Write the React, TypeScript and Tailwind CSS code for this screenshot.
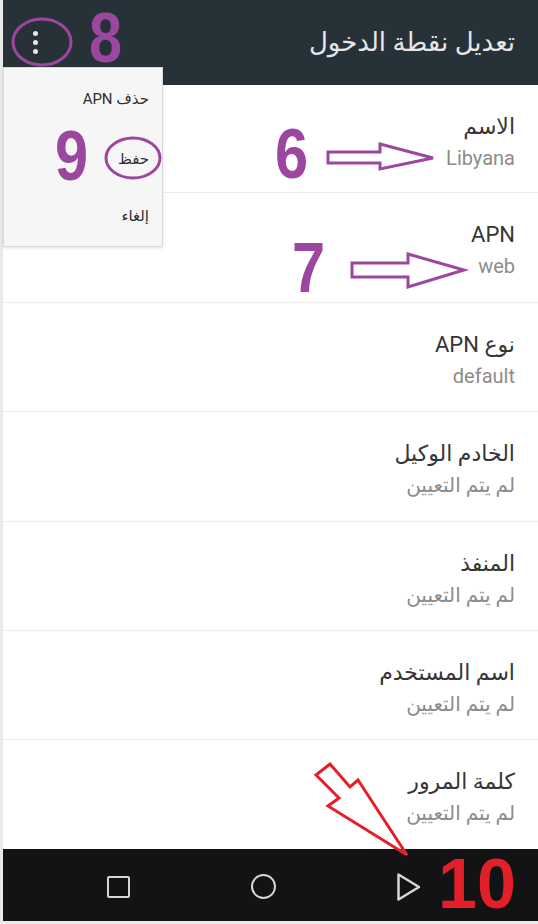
import React from "react";

type Row = { title: string; value: string; h: string };

const rows: Row[] = [
  { title: "الاسم", value: "Libyana", h: "h-[108px]" },
  { title: "APN", value: "web", h: "h-[110px]" },
  { title: "نوع APN", value: "default", h: "h-[109px]" },
  { title: "الخادم الوكيل", value: "لم يتم التعيين", h: "h-[110px]" },
  { title: "المنفذ", value: "لم يتم التعيين", h: "h-[109px]" },
  { title: "اسم المستخدم", value: "لم يتم التعيين", h: "h-[109px]" },
  { title: "كلمة المرور", value: "لم يتم التعيين", h: "h-[109px]" },
];

const PURPLE = "#9b479f";
const RED = "#e3202a";

function Num({ n, className, red }: { n: string; className: string; red?: boolean }) {
  return (
    <span
      className={`absolute origin-left text-[70px] leading-none font-bold ${red ? "scale-x-100" : "scale-x-[0.85]"} ${className}`}
      style={{ fontFamily: '"Liberation Sans", Arial, sans-serif', color: red ? RED : PURPLE }}
    >
      {n}
    </span>
  );
}

export default function App() {
  return (
    <div
      className="relative flex h-[924px] w-[538px] flex-col overflow-hidden bg-[#e9ebeb] pl-[3px]"
      style={{ fontFamily: 'Roboto, "DejaVu Sans", sans-serif' }}
    >
      {/* toolbar */}
      <div className="flex h-[85px] shrink-0 items-center justify-between bg-[#273238] pr-[23px] pl-[30px]">
        <div className="flex flex-col gap-[4px] pb-[1px]">
          <span className="h-[5px] w-[5px] rounded-full bg-[#e8e8e8]" />
          <span className="h-[5px] w-[5px] rounded-full bg-[#e8e8e8]" />
          <span className="h-[5px] w-[5px] rounded-full bg-[#e8e8e8]" />
        </div>
        <h1 dir="rtl" className="text-[26px] text-[#e4e6e7]">
          تعديل نقطة الدخول
        </h1>
      </div>

      {/* settings list */}
      <div className="flex flex-col bg-white">
        {rows.map((r, i) => (
          <div
            key={r.title}
            dir="rtl"
            className={`${r.h} ${i < rows.length - 1 ? "border-b border-[#ededed]" : ""} pt-[29px] pr-[23px]`}
          >
            <div className="text-[22px] leading-[26px] text-[#363636]">{r.title}</div>
            <div className="mt-[5px] text-[20px] leading-[26px] text-[#8c8c8c]">{r.value}</div>
          </div>
        ))}
      </div>

      {/* nav bar */}
      <div className="flex h-[72px] shrink-0 items-center bg-[#121314]">
        <div className="flex w-full items-center pt-[3px]">
          <div className="ml-[104px] h-[22px] w-[23px] rounded-[2px] border-[2.5px] border-[#d6d6d6]" />
          <div className="ml-[121px] h-[25px] w-[25px] rounded-full border-[2.5px] border-[#d6d6d6]" />
          <svg className="ml-[120px]" width="26" height="30" viewBox="0 0 26 30">
            <path d="M2.5 2.5 L23 15 L2.5 27.5 Z" fill="none" stroke="#d6d6d6" strokeWidth="2.5" strokeLinejoin="round" />
          </svg>
        </div>
      </div>
      <div className="flex-1 bg-[#e9ebeb]" />

      {/* overflow menu */}
      <div
        dir="rtl"
        className="absolute top-[67px] left-[3px] flex h-[180px] w-[160px] flex-col border border-[#d9d9d9] bg-[#f6f6f6] pr-[13px] text-[15px] text-[#2f2f2f] shadow-[0_1px_3px_rgba(0,0,0,0.12)]"
      >
        <div className="mt-[20px] leading-[22px]">حذف APN</div>
        <div className="mt-[38px] leading-[22px]">حفظ</div>
        <div className="mt-[35px] leading-[22px]">إلغاء</div>
      </div>

      {/* annotations */}
      <svg className="pointer-events-none absolute inset-0" width="538" height="924" viewBox="0 0 538 924">
        <ellipse cx="42" cy="42" rx="29" ry="23" fill="none" stroke={PURPLE} strokeWidth="3" />
        <ellipse cx="133" cy="158" rx="27" ry="20" fill="none" stroke={PURPLE} strokeWidth="3" />
        <path
          d="M328 152 L380 152 L380 144 L433 158 L380 169 L380 163 L328 163 Z"
          fill="none"
          stroke={PURPLE}
          strokeWidth="3"
        />
        <path
          d="M352 263 L408 263 L408 254 L464 270 L408 287 L408 277 L352 277 Z"
          fill="none"
          stroke={PURPLE}
          strokeWidth="3"
        />
        <path
          d="M316 775 L330 764 L350 787 L358 780 L407 855 L328 806 L339 798 Z"
          fill="none"
          stroke={RED}
          strokeWidth="3"
        />
      </svg>
      <Num n="8" className="top-[3px] left-[89px]" />
      <Num n="9" className="top-[121px] left-[55px]" />
      <Num n="6" className="top-[119px] left-[275px]" />
      <Num n="7" className="top-[233px] left-[292px]" />
      <Num n="10" className="top-[849px] left-[438px]" red />
    </div>
  );
}
